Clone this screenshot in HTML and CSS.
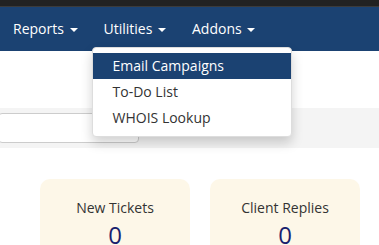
FILE: index.html
```html
<!DOCTYPE html>
<html lang="en">
<head>
  <meta charset="UTF-8">
  <meta name="viewport" content="width=device-width, initial-scale=1.0">
  <title>Admin Area</title>
  <link rel="stylesheet" href="styles.css">
</head>
<body>
  <div class="topbar"></div>

  <ul class="navbar">
    <li class="nav-item">Reports <span class="caret"></span></li>
    <li class="nav-item open">Utilities <span class="caret"></span>
      <ul class="dropdown">
        <li class="active">Email Campaigns</li>
        <li>To-Do List</li>
        <li>WHOIS Lookup</li>
      </ul>
    </li>
    <li class="nav-item">Addons <span class="caret"></span></li>
  </ul>

  <div class="spacer"></div>

  <div class="searchbar">
    <input type="text" class="search-input">
  </div>

  <div class="stats">
    <div class="stat-card">
      <div class="stat-title">New Tickets</div>
      <div class="stat-value">0</div>
    </div>
    <div class="stat-card">
      <div class="stat-title">Client Replies</div>
      <div class="stat-value">0</div>
    </div>
  </div>
</body>
</html>
```

FILE: styles.css
```css
* {
  padding: 0;
  margin: 0;
  box-sizing: border-box;
}

body {
  font-family: 'Open Sans', 'Noto Sans', sans-serif;
  font-size: 14px;
  color: #333;
  background-color: #fff;
  overflow: hidden;
}

.topbar {
  height: 7px;
  background-color: #222;
  border-bottom: 1px solid #3b3b3b;
}

.navbar {
  list-style: none;
  display: flex;
  height: 44px;
  background-color: #1b4272;
}

.nav-item {
  position: relative;
  padding: 0 13px;
  line-height: 44px;
  color: #fff;
}

.caret {
  display: inline-block;
  margin-left: 2px;
  vertical-align: middle;
  border-top: 4px solid #fff;
  border-left: 4px solid transparent;
  border-right: 4px solid transparent;
}

.dropdown {
  position: absolute;
  top: 40px;
  left: 1px;
  width: 200px;
  list-style: none;
  padding: 5px 0;
  background-color: #fff;
  border: 1px solid #ddd;
  border-radius: 4px;
  box-shadow: 0 6px 12px rgba(0, 0, 0, 0.18);
  z-index: 10;
}

.dropdown li {
  padding: 3px 20px;
  line-height: 20px;
  color: #333;
  white-space: nowrap;
}

.dropdown li.active {
  background-color: #1b4272;
  color: #fff;
}

.spacer {
  height: 57px;
}

.searchbar {
  height: 40px;
  padding: 5px 0;
  background-color: #f4f4f4;
}

.search-input {
  display: block;
  width: 141px;
  height: 30px;
  margin-left: -2px;
  border: 1px solid #ccc;
  border-radius: 4px;
  background-color: #fff;
}

.stats {
  display: flex;
  gap: 20px;
  padding: 31px 0 0 40px;
}

.stat-card {
  width: 150px;
  height: 100px;
  padding-top: 19px;
  text-align: center;
  background-color: #fdf7e8;
  border-radius: 10px;
}

.stat-title {
  line-height: 20px;
  color: #333;
}

.stat-value {
  margin-top: 1px;
  font-size: 24px;
  line-height: 32px;
  color: #1a1f6e;
}
```
